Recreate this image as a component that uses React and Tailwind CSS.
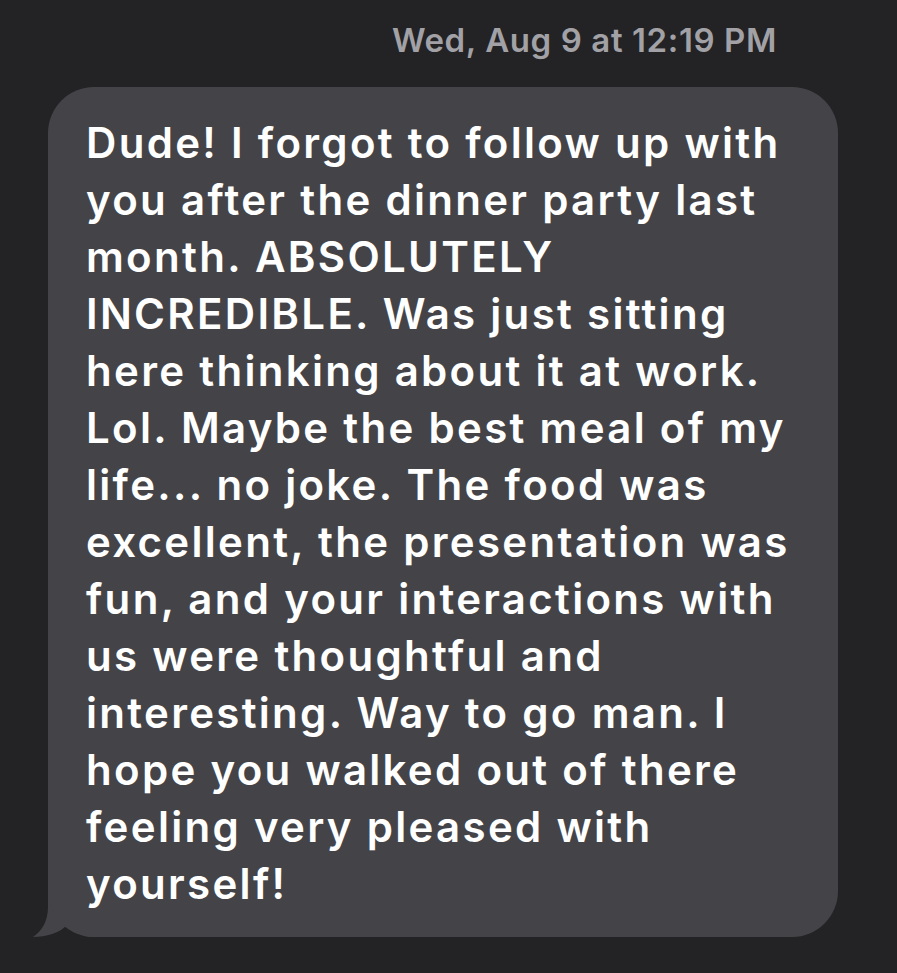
const lines = [
  "Dude! I forgot to follow up with",
  "you after the dinner party last",
  "month. ABSOLUTELY",
  "INCREDIBLE. Was just sitting",
  "here thinking about it at work.",
  "Lol. Maybe the best meal of my",
  "life... no joke. The food was",
  "excellent, the presentation was",
  "fun, and your interactions with",
  "us were thoughtful and",
  "interesting. Way to go man. I",
  "hope you walked out of there",
  "feeling very pleased with",
  "yourself!",
];

export default function App() {
  return (
    <div
      className="min-h-[973px] w-full bg-[#232325] pt-[20px]"
      style={{ fontFamily: "Inter, 'Noto Sans', sans-serif" }}
    >
      <div className="flex justify-end pr-[120px]">
        <span className="text-[33px] leading-[40px] font-semibold tracking-[0.6px] text-[#a1a1a6]">
          Wed, Aug 9 at 12:19 PM
        </span>
      </div>

      <div className="relative ml-[48px] mt-[27px] w-[790px]">
        {/* bubble tail */}
        <svg
          className="absolute left-[-16px] bottom-0"
          width="64"
          height="50"
          viewBox="0 0 64 50"
        >
          <path
            d="M16 0 L64 0 L64 50 L58 50 C48 48 40 44 35 38 C28 46 14 50 1 50 C10 44 16 34 16 20 Z"
            fill="#444448"
          />
        </svg>
        <div className="relative rounded-[46px] bg-[#444448] pl-[38px] pr-[10px] pt-[27px] pb-[25px]">
          {lines.map((l, i) => (
            <div
              key={i}
              className="text-[42px] leading-[57px] font-semibold tracking-[2.3px] text-white whitespace-nowrap"
            >
              {l}
            </div>
          ))}
        </div>
      </div>
    </div>
  );
}
